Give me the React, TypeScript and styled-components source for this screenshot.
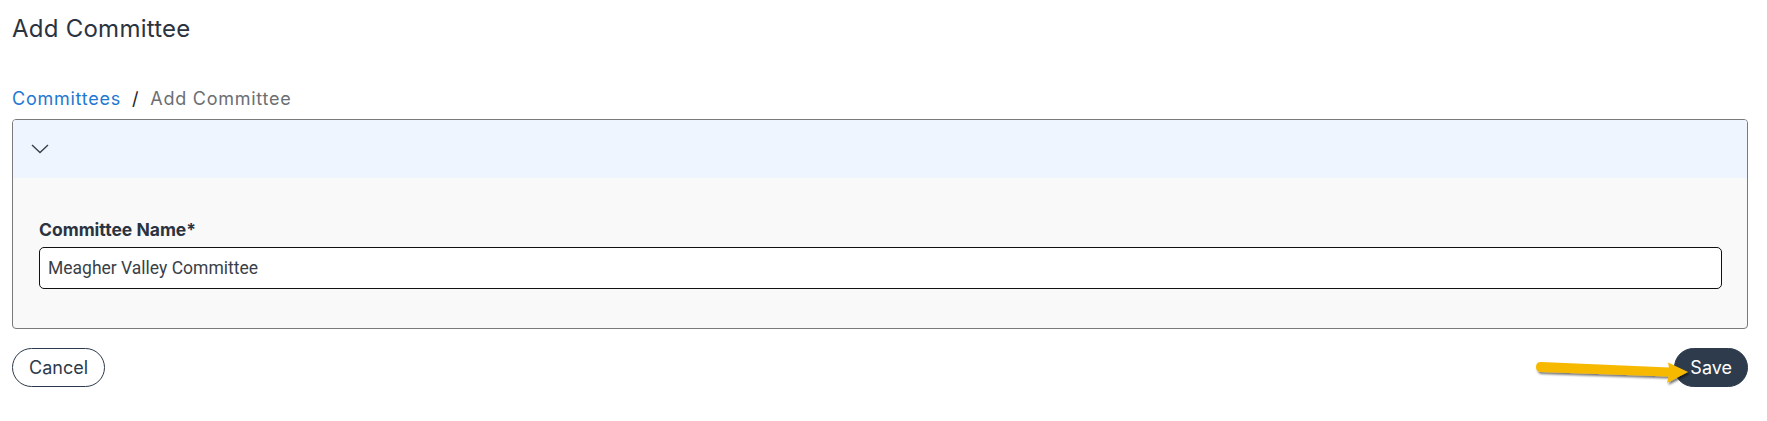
import React from "react";
import styled, { createGlobalStyle } from "styled-components";

const GlobalStyle = createGlobalStyle`
  html, body { margin: 0; padding: 0; background: #ffffff; }
  * { box-sizing: border-box; }
`;

const Page = styled.div`
  position: relative;
  width: 1767px;
  height: 421px;
  padding: 14px 19px 0 12px;
  font-family: Inter, "Noto Sans", sans-serif;
`;

const Title = styled.h1`
  margin: 0;
  font-family: Inter, sans-serif;
  font-weight: 400;
  font-size: 24px;
  letter-spacing: 0.25px;
  line-height: 30px;
  color: #2b3340;
`;

const Breadcrumbs = styled.nav`
  display: flex;
  align-items: center;
  gap: 11px;
  margin-top: 42px;
  height: 26px;
  font-family: Inter, sans-serif;
  font-size: 18px;
  letter-spacing: 0.75px;
  line-height: 26px;
`;

const CrumbLink = styled.a`
  color: #1f78d1;
  text-decoration: none;
`;

const Sep = styled.span`
  color: #222;
`;

const CrumbCurrent = styled.span`
  color: #6b6e73;
`;

const Card = styled.section`
  margin-top: 7px;
  border: 1px solid #7a7a7a;
  border-radius: 4px;
  overflow: hidden;
  background: #f9f9f9;
`;

const CardHeader = styled.div`
  height: 58px;
  background: #eef5fe;
  display: flex;
  align-items: center;
  padding-left: 17px;
`;

const CardBody = styled.div`
  padding: 42px 25px 39px 26px;
  display: flex;
  flex-direction: column;
  gap: 7px;
`;

const Label = styled.label`
  font-family: Inter, Roboto, sans-serif;
  font-weight: 700;
  font-size: 17.5px;
  line-height: 20px;
  color: #2b3340;
`;

const Input = styled.input`
  height: 42px;
  width: 100%;
  border: 1.5px solid #111;
  border-radius: 5px;
  background: #fff;
  padding: 0 8px;
  font-family: Roboto, "Liberation Sans", sans-serif;
  font-size: 17.5px;
  color: #3a3f47;
  outline: none;
`;

const Actions = styled.div`
  margin-top: 19px;
  display: flex;
  justify-content: space-between;
  align-items: center;
`;

const Button = styled.button<{ $primary?: boolean }>`
  height: 39px;
  border-radius: 20px;
  padding: 0 ${(p) => (p.$primary ? "15px" : "16px")};
  font-family: Inter, sans-serif;
  font-size: 18px;
  cursor: pointer;
  border: 1px solid #2b3a4d;
  background: ${(p) => (p.$primary ? "#2d3b4d" : "#ffffff")};
  color: ${(p) => (p.$primary ? "#ffffff" : "#2b3a4d")};
`;

const ArrowMark = styled.svg`
  position: absolute;
  left: 1530px;
  top: 355px;
  pointer-events: none;
`;

const Chevron = () => (
  <svg width="20" height="12" viewBox="0 0 20 12" fill="none">
    <path d="M2 2 L10 9.5 L18 2" stroke="#3a4048" strokeWidth="1.4" />
  </svg>
);

export default function App() {
  return (
    <>
      <GlobalStyle />
      <Page>
        <Title>Add Committee</Title>
        <Breadcrumbs>
          <CrumbLink href="#">Committees</CrumbLink>
          <Sep>/</Sep>
          <CrumbCurrent>Add Committee</CrumbCurrent>
        </Breadcrumbs>
        <Card>
          <CardHeader>
            <Chevron />
          </CardHeader>
          <CardBody>
            <Label htmlFor="cname">Committee Name*</Label>
            <Input id="cname" defaultValue="Meagher Valley Committee" />
          </CardBody>
        </Card>
        <Actions>
          <Button>Cancel</Button>
          <Button $primary>Save</Button>
        </Actions>
        <ArrowMark width="170" height="36" viewBox="0 0 170 36">
          <defs>
            <filter id="sh" x="-10%" y="-50%" width="130%" height="200%">
              <feDropShadow dx="1.5" dy="2" stdDeviation="1.2" floodColor="#000" floodOpacity="0.55" />
            </filter>
          </defs>
          <g filter="url(#sh)">
            <path
              d="M11 7 L139 12.5 L138 7.5 L158 17 L137 28 L138.5 21.5 L11 17 Q6 17 6 12 Q6 7 11 7 Z"
              fill="#f7b900"
            />
          </g>
        </ArrowMark>
      </Page>
    </>
  );
}
